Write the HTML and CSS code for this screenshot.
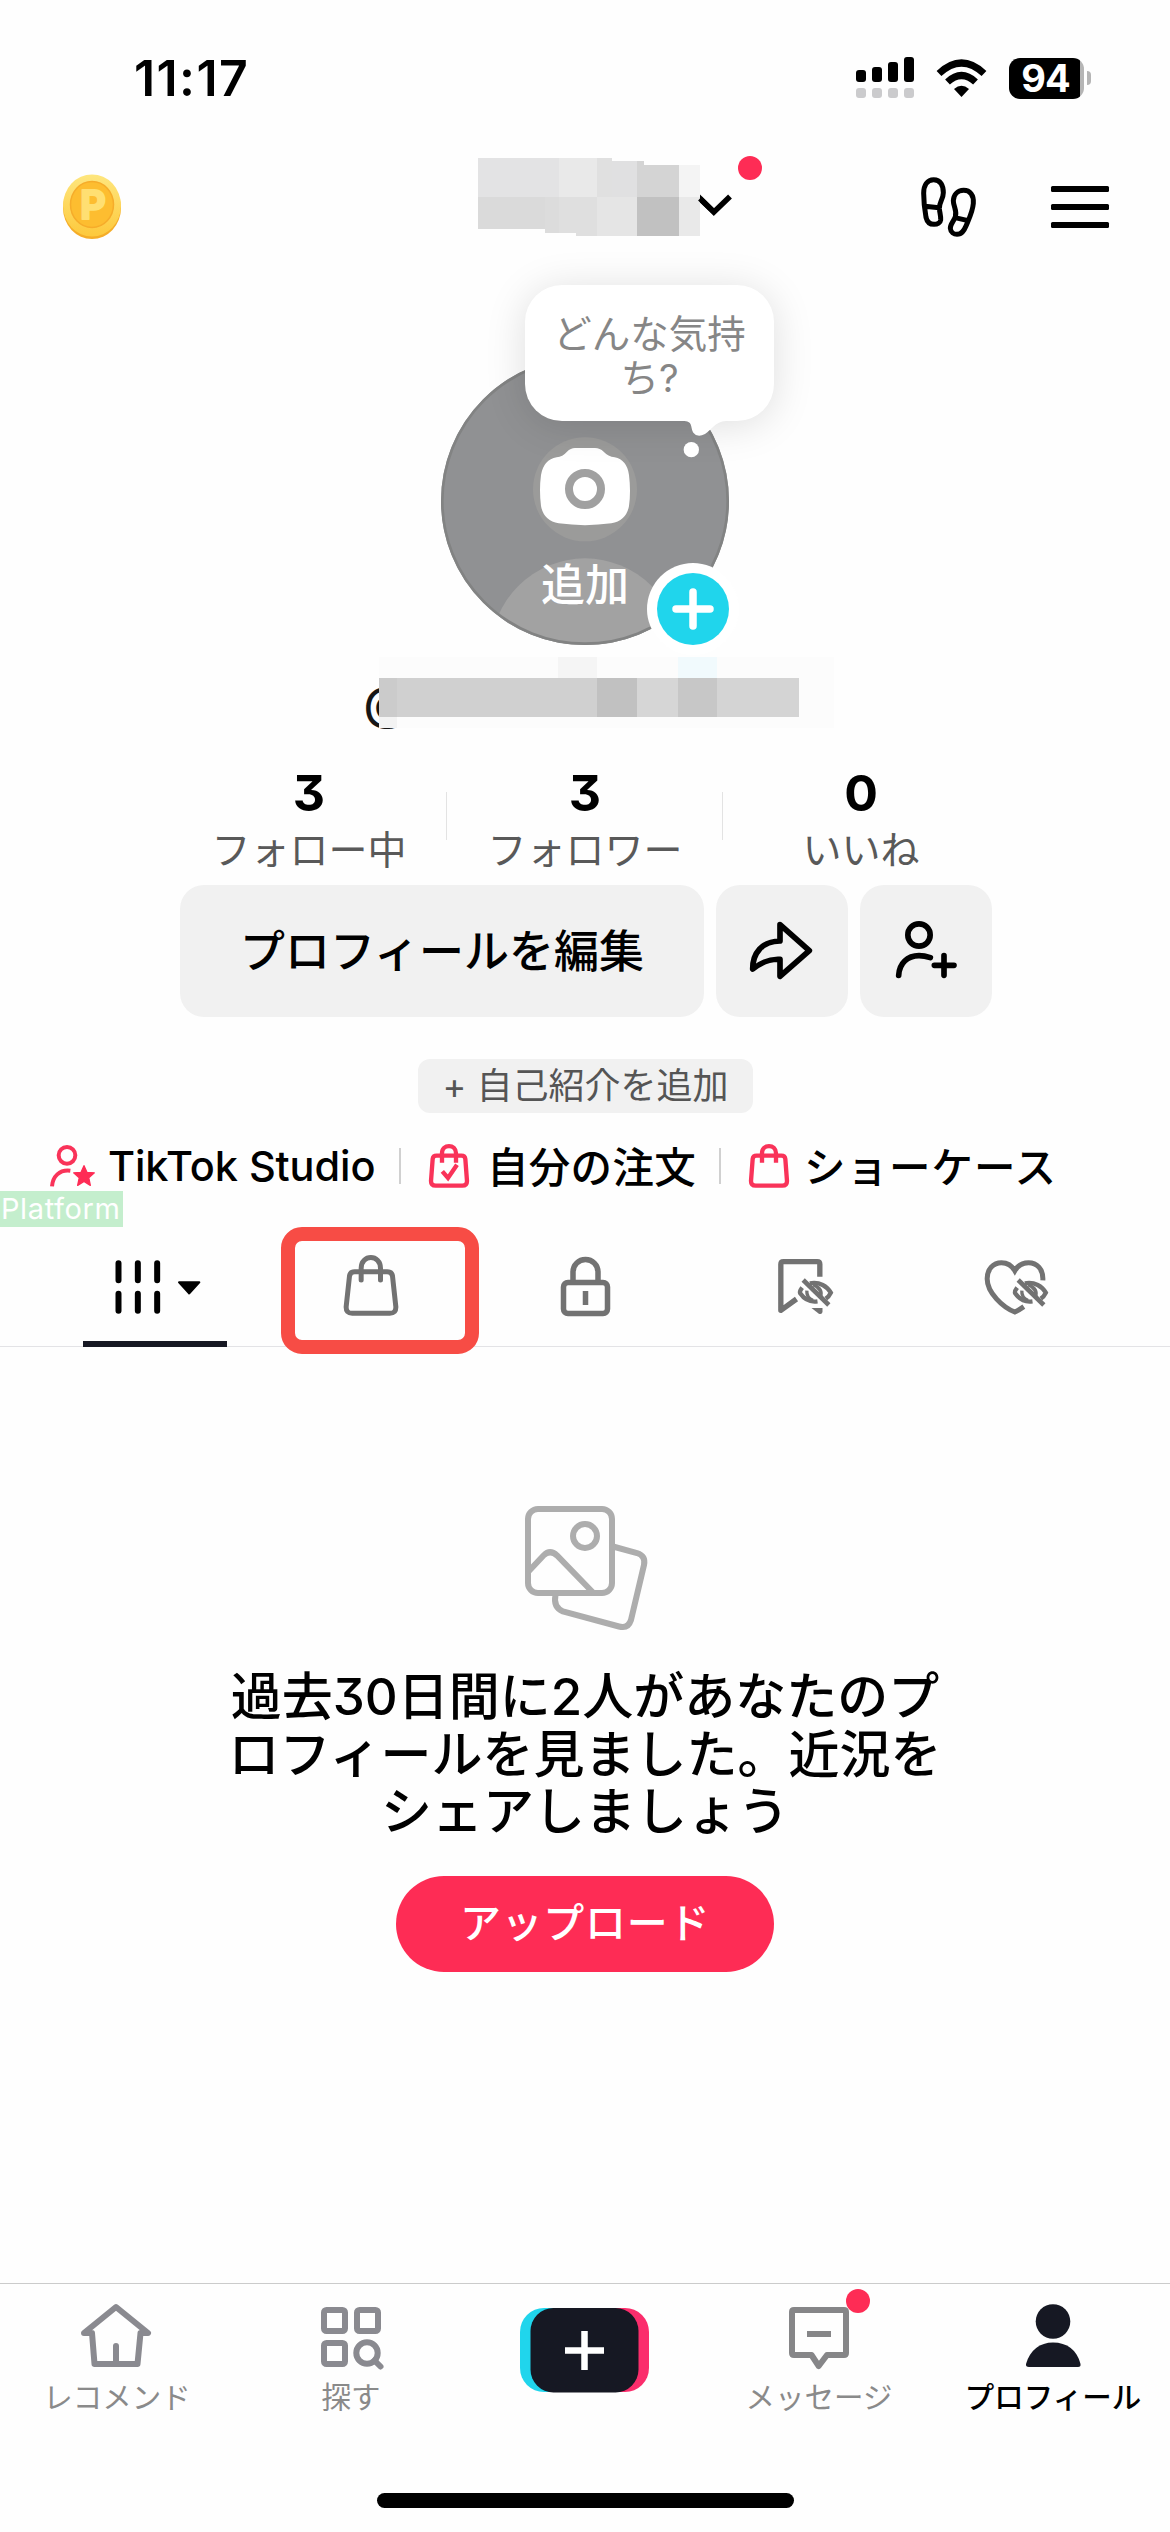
FILE: index.html
```html
<!DOCTYPE html>
<html lang="ja">
<head>
<meta charset="utf-8">
<title>プロフィール</title>
<link rel="stylesheet" href="styles.css">
</head>
<body>
<div class="status">
  <span class="time">11:17</span>
  <svg class="signal" width="60" height="44" viewBox="855 56 60 44">
    <g fill="#000"><rect x="856" y="70" width="10" height="12" rx="3"/><rect x="872" y="67" width="10" height="15" rx="3"/><rect x="888" y="62" width="10" height="20" rx="3"/><rect x="904" y="57" width="10" height="25" rx="3"/></g>
    <g fill="#cbcbcd"><rect x="856" y="88" width="10" height="10" rx="3"/><rect x="872" y="88" width="10" height="10" rx="3"/><rect x="888" y="88" width="10" height="10" rx="3"/><rect x="904" y="88" width="10" height="10" rx="3"/></g>
  </svg>
  <svg class="wifi" width="52" height="40" viewBox="935 57 52 40">
    <g fill="none" stroke="#000" stroke-width="7"><path d="M939 72.5Q961.500 51.500 984 72.500"/><path d="M947.500 81Q961.500 68 975.500 81"/></g>
    <path d="M954 88Q961.500 81.500 969 88L961.500 96Z"/>
  </svg>
  <div class="battery"><span>94</span></div>
  <i class="nub"></i>
</div>

<header class="top">
  <svg class="coin" width="58" height="66" viewBox="63 175 58 66">
    <defs><linearGradient id="c" x1="0" y1="0" x2="0" y2="1"><stop offset="0" stop-color="#fee67e"/><stop offset="1" stop-color="#fdc93c"/></linearGradient></defs>
    <ellipse cx="92" cy="209" rx="29" ry="31" fill="#f5ad28"/>
    <ellipse cx="92" cy="206.500" rx="29" ry="31" fill="url(#c)"/>
    <ellipse cx="92" cy="205.500" rx="21.500" ry="23" fill="#fdbd30" stroke="#f6ac2a" stroke-width="1.500"/>
    <text x="93" y="220" class="coin-p">P</text>
  </svg>
  <svg class="account" width="286" height="102" viewBox="478 156 286 102">
    <g shape-rendering="crispEdges">
      <rect x="478" y="158" width="81" height="39" fill="#e3e3e4"/><rect x="559" y="158" width="38" height="39" fill="#e9e9e9"/><rect x="597" y="158" width="15" height="39" fill="#e0e0e0"/><rect x="612" y="161" width="25" height="36" fill="#e0e0e1"/><rect x="637" y="161" width="7" height="36" fill="#d4d4d4"/><rect x="644" y="165" width="35" height="32" fill="#d4d4d4"/><rect x="679" y="165" width="21" height="32" fill="#f4f4f4"/>
      <rect x="478" y="197" width="67" height="32" fill="#dadada"/><rect x="545" y="197" width="14" height="36" fill="#dcdcdc"/><rect x="559" y="197" width="17" height="36" fill="#dfdfdf"/><rect x="576" y="197" width="21" height="39" fill="#dfdfdf"/><rect x="597" y="197" width="40" height="39" fill="#e5e5e5"/><rect x="637" y="197" width="42" height="39" fill="#c1c1c1"/><rect x="679" y="197" width="21" height="39" fill="#e9e9e9"/>
    </g>
    <path d="M700 194.500L714 208.500V216L700 202.500Z"/>
    <path d="M700 198.500L714 212L730 196.500" fill="none" stroke="#000" stroke-width="5.500"/>
    <circle cx="750" cy="168" r="12" fill="#fe2c55"/>
  </svg>
  <svg class="steps" width="60" height="102" viewBox="717 48 180 306" fill="none" stroke="#000" stroke-width="15">
    <path d="M731 160C731 135 742 119 761 119C782 119 790 137 790 158C790 178 777 186 778 206C779 218 783 228 782 240C781 248 773 253 762 253C748 253 741 245 738 232C735 215 731 185 731 160ZM735 199L777 203"/>
    <path d="M880 190C882 165 870 151 851 151C832 151 821 165 820 182C820 200 832 212 826 230C822 243 810 253 811 265C812 277 822 283 831 283C846 283 852 272 858 258C867 236 878 215 880 190ZM822 232L864 242"/>
  </svg>
  <div class="menu"><i></i><i></i><i></i></div>
</header>

<section class="avatar-area">
  <div class="avatar">
    <svg width="288" height="288" viewBox="303 261 864 864">
      <clipPath id="a"><circle cx="735" cy="693" r="432"/></clipPath>
      <g clip-path="url(#a)">
        <rect x="303" y="261" width="864" height="864" fill="#909193"/>
        <circle cx="735" cy="1148" r="283" fill="#a2a2a2"/>
        <circle cx="735" cy="658" r="156" fill="#9b9b9a"/>
      </g>
      <circle cx="735" cy="693" r="428" fill="none" stroke="#828383" stroke-width="8"/>
      <path fill="#fff" d="M705 534H765Q780 534 791 545Q804 559 824 562Q861 570 867 615Q873 665 867 708Q859 752 814 760Q735 771 656 760Q611 752 603 708Q597 660 603 615Q611 569 650 562Q668 560 681 545Q692 534 705 534Z"/>
      <circle cx="735" cy="657" r="48" fill="none" stroke="#a0a0a0" stroke-width="24"/>
      <text x="735" y="993" class="avatar-text">追加</text>
    </svg>
    <div class="mood">どんな気持ち?</div>
    <svg class="tail" width="48" height="50" viewBox="1020 450 144 150" fill="#fff">
      <path d="M1028 450V453C1060 453 1050 470 1060 488Q1072 504 1095 492C1115 480 1125 455 1158 453V450Z"/>
      <circle cx="1054" cy="539" r="23"/>
    </svg>
    <svg class="plus-badge" width="92" height="92" viewBox="0 0 92 92">
      <circle cx="46" cy="46" r="46" fill="#fff"/><circle cx="46" cy="46" r="36" fill="#20d5ec"/>
      <path d="M46 29V63M29 46H63" stroke="#fff" stroke-width="7.500" stroke-linecap="round"/>
    </svg>
  </div>
</section>

<div class="handle">
  <svg width="474" height="72" viewBox="360 657 474 72">
    <text x="363.500" y="720" class="handle-at">@</text>
    <g shape-rendering="crispEdges">
      <rect x="379" y="657" width="455" height="71" fill="#fcfcfc"/><rect x="558" y="657" width="39" height="21" fill="#f5f5f5"/><rect x="678" y="657" width="39" height="21" fill="#f1fafd"/>
      <rect x="379" y="678" width="18" height="39" fill="#cbcbcb"/><rect x="397" y="678" width="200" height="39" fill="#d0d0d0"/><rect x="597" y="678" width="40" height="39" fill="#c1c1c1"/><rect x="637" y="678" width="41" height="39" fill="#d6d6d6"/><rect x="678" y="678" width="39" height="39" fill="#c7c7c7"/><rect x="717" y="678" width="82" height="39" fill="#d4d4d4"/>
      <rect x="379" y="717" width="18" height="11" fill="#f3f3f3"/>
    </g>
  </svg>
</div>

<section class="stats">
  <div class="stat"><b>3</b><span>フォロー中</span></div>
  <div class="stat"><b>3</b><span>フォロワー</span></div>
  <div class="stat"><b>0</b><span>いいね</span></div>
</section>

<section class="actions">
  <button class="edit">プロフィールを編集</button>
  <button class="square"><svg width="132" height="132" viewBox="48 45 396 396" fill="none" stroke="#000" stroke-width="17" stroke-linejoin="round"><path d="M240 164L328 242L240 319V268C208 266 180 280 158 297C158 250 185 214 240 213Z"/></svg></button>
  <button class="square"><svg width="132" height="132" viewBox="480 45 396 396" fill="none" stroke="#000" stroke-width="17"><circle cx="657" cy="195" r="33.500"/><path stroke-linecap="round" d="M596 316C598 280 622 257 657 257C670 257 682 260 691 263M732 257V316M703 286H762"/></svg></button>
</section>

<div class="bio"><span>+ 自己紹介を追加</span></div>

<nav class="links">
  <svg width="48" height="52" viewBox="54 60 144 156"><g fill="none" stroke="#f93359" stroke-width="12"><circle cx="111" cy="106" r="25"/><path d="M66 199C68 170 88 148 121 152"/></g><path fill="#fe2c55" stroke="#fe2c55" stroke-width="4" stroke-linejoin="round" d="M162 137L170.800 156.900L193 158.500L176.300 173.600L181 196L162 184L143 196L147.700 173.600L131 158.500L153.200 156.900Z"/></svg>
  <span class="studio">TikTok Studio</span><i class="sep"></i>
  <svg class="l2" width="44" height="52" viewBox="138 810 132 156" fill="none" stroke="#f93359" stroke-width="13"><path d="M167 857H241Q252 857 253 867L258 933Q258 947 244 947H164Q150 947 150 933L155 867Q156 857 167 857ZM183 878V850C183 821 225 821 225 850V878M184 904L201 924L228 884"/></svg>
  <span class="orders">自分の注文</span><i class="sep s2"></i>
  <svg class="l3" width="44" height="52" viewBox="138 810 132 156" fill="none" stroke="#f93359" stroke-width="13"><path d="M167 857H241Q252 857 253 867L258 933Q258 947 244 947H164Q150 947 150 933L155 867Q156 857 167 857ZM183 878V850C183 821 225 821 225 850V878"/></svg>
  <span class="showcase">ショーケース</span>
  <em class="platform">Platform</em>
</nav>

<nav class="tabs">
  <div class="tab active"><svg width="215" height="155" viewBox="52.5 216 645 465"><path d="M264 430V481M322 430V481M380 430V481M264 521V572M322 521V572M380 521V572" stroke="#000" stroke-width="18" stroke-linecap="round"/><path d="M446 487H506L476 520Z" stroke="#000" stroke-width="7" stroke-linejoin="round"/></svg></div>
  <div class="tab"><svg width="215" height="155" viewBox="697.5 216 645 465" fill="none" stroke="#727272" stroke-width="15" stroke-linecap="round"><path d="M972 455H1070Q1084 455 1086 468L1096 560Q1097 580 1078 580H965Q946 580 947 560L957 468Q959 455 972 455ZM992 480V445C992 402 1050 402 1050 445V480"/></svg><div class="focus"></div></div>
  <div class="tab"><svg width="215" height="155" viewBox="477.5 1192 215 155" fill="none" stroke="#727272" stroke-width="5.500"><rect x="563" y="1282.500" width="44" height="31" rx="4.500"/><path d="M572.500 1282V1272A12.500 12.500 0 0 1 597.500 1272V1282M585 1291V1305"/></svg></div>
  <div class="tab"><svg width="215" height="155" viewBox="-22.5 966 645 465" fill="none" stroke="#727272" stroke-width="16"><path d="M358 1220V1183Q358 1175 350 1175H249Q241 1175 241 1183V1321L288 1287" stroke-linejoin="round"/><path d="M333 1314H366V1326Q364 1335 355 1331Z" fill="#727272" stroke="none"/><g id="eye" stroke-width="13"><path d="M308 1230L385 1305" stroke-width="14"/><path d="M328 1240C358 1234 380 1250 391 1268C387 1276 382 1282 376 1286"/><path d="M338 1244C358 1252 366 1266 359 1282" stroke-width="11"/><path d="M305 1253Q296 1265 299 1270C312 1289 330 1297 351 1294"/><path d="M319 1262C318 1275 325 1286 337 1291" stroke-width="10"/></g></svg></div>
  <div class="tab"><svg width="215" height="155" viewBox="622.5 966 645 465" fill="none" stroke="#727272" stroke-width="15"><path d="M1027 1231C1029 1196 1008 1178 984 1178C962 1178 950 1190 943 1202C936 1190 924 1178 903 1178C878 1178 860 1198 860 1226C860 1268 907 1312 943 1326C952 1322 960 1317 970 1310"/><use href="#eye" x="645"/></svg></div>
</nav>

<main class="empty">
  <svg width="132" height="136" viewBox="519 1500 132 136" fill="none" stroke="#adadad" stroke-width="6"><rect x="528" y="1509" width="84" height="84" rx="10"/><circle cx="585" cy="1536" r="12"/><path d="M528 1572L543.500 1555.500Q550 1549 557 1555.500L592.500 1592M613 1546.500L637 1553Q646 1556 644 1565L631 1620Q628 1629 619 1626.500L563 1611.500Q553 1607 555.500 1595"/></svg>
  <h1>過去30日間に2人があなたのプ<br>ロフィールを見ました。近況を<br>シェアしましょう</h1>
  <button class="upload">アップロード</button>
</main>

<footer class="bottom">
  <div class="item"><svg width="234" height="94" viewBox="0 2283 234 94" fill="none" stroke="#8a8a90" stroke-width="6" stroke-linejoin="round" stroke-linecap="round"><path d="M84 2333L116 2307L148 2333H140.500L137.500 2364H94.500L92 2333ZM116 2346V2363"/></svg><span>レコメンド</span></div>
  <div class="item"><svg width="234" height="94" viewBox="234 2283 234 94" fill="none" stroke="#8a8a90" stroke-width="6"><rect x="324" y="2310" width="21" height="21" rx="2.500"/><rect x="357" y="2310" width="21" height="21" rx="2.500"/><rect x="324" y="2343" width="21" height="21" rx="2.500"/><circle cx="367" cy="2353" r="10.700"/><path d="M374.500 2360.500L380.500 2366.500" stroke-linecap="round"/></svg><span>探す</span></div>
  <div class="item"><svg width="234" height="124" viewBox="468 2283 234 124"><rect x="520" y="2308" width="90" height="84" rx="24" fill="#20d5ec"/><rect x="560" y="2308" width="89" height="84" rx="24" fill="#fb2d6c"/><rect x="530.500" y="2308" width="108" height="84.500" rx="23" fill="#161823"/><path d="M584.500 2331V2370M565 2350.500H604" stroke="#fff" stroke-width="6.500"/></svg></div>
  <div class="item"><svg width="234" height="94" viewBox="702 2283 234 94" fill="none" stroke="#868688" stroke-width="6" stroke-linejoin="round"><path d="M794 2310H844Q846 2310 846 2312V2353Q846 2355 844 2355H827L818.700 2366L811.500 2355H794Q792 2355 792 2353V2312Q792 2310 794 2310ZM807 2334H831"/><circle cx="858" cy="2301" r="12" fill="#fe2c55" stroke="none"/></svg><span>メッセージ</span></div>
  <div class="item on"><svg width="234" height="94" viewBox="936 2283 234 94" fill="#161823"><circle cx="1053" cy="2321.500" r="17.300"/><path d="M1026 2364C1030 2350 1040 2342.500 1053 2342.500C1067 2342.500 1077 2350 1080.500 2364Q1081 2367 1078 2367H1029Q1025.500 2367 1026 2364Z"/></svg><span>プロフィール</span></div>
</footer>
<div class="indicator"></div>
</body>
</html>
```

FILE: styles.css
```css
* { box-sizing: border-box; }
body {
  margin: 0;
  width: 1170px;
  height: 2532px;
  background: #fefefe;
  color: #000;
  font-family: Inter, "Noto Sans CJK JP", sans-serif;
  font-feature-settings: "cv09";
  display: flex;
  flex-direction: column;
  overflow: hidden;
}
svg { display: block; flex: none; }
button {
  border: 0;
  padding: 0;
  font: inherit;
  color: inherit;
}
.status {
  height: 156px;
  padding-left: 134px;
  display: flex;
  align-items: center;
}
.time {
  width: 721px;
  font-size: 50px;
  font-weight: 600;
  letter-spacing: 1.4px;
  font-feature-settings: normal;
}
.wifi { margin-left: 20px; }
.battery {
  width: 75px;
  height: 41px;
  margin-left: 22px;
  border-radius: 11px;
  background: linear-gradient(90deg, #000 71px, #b5b5b5 71px);
  color: #fff;
  font-size: 38px;
  line-height: 41px;
  font-weight: 700;
  text-align: center;
  padding-right: 2px;
  letter-spacing: -1px;
}
.nub {
  width: 4px;
  height: 14px;
  margin-left: 3px;
  border-radius: 0 5px 5px 0;
  background: #b5b5b5;
}
.top {
  height: 102px;
  padding-left: 63px;
  display: flex;
  align-items: center;
}
.coin-p {
  font-size: 40px;
  font-weight: 700;
  text-anchor: middle;
  fill: #ffdf72;
  stroke: #ffdf72;
  stroke-width: 2;
  stroke-linejoin: round;
}
.account { margin-left: 357px; }
.steps { margin-left: 155px; }
.menu {
  width: 58px;
  margin-left: 72px;
  display: flex;
  flex-direction: column;
  gap: 12px;
}
.menu i { height: 6px; border-radius: 1.5px; background: #000; }
.avatar-area {
  height: 399px;
  padding-top: 99px;
  display: flex;
  justify-content: center;
}
.avatar { position: relative; width: 288px; height: 288px; }
.avatar-text { font-size: 132px; font-weight: 500; text-anchor: middle; fill: #fff; }
.mood {
  position: absolute;
  left: 84px;
  top: -72px;
  width: 249px;
  height: 136px;
  padding: 28px 24px 0 24px;
  border-radius: 37px;
  background: #fff;
  box-shadow: 0 4px 40px rgba(0, 0, 0, .13);
  color: #868686;
  font-size: 38.5px;
  line-height: 43.5px;
  text-align: center;
  word-break: break-all;
}
.tail { position: absolute; left: 239px; top: 63px; }
.plus-badge { position: absolute; left: 206px; top: 206px; }
.handle { height: 72px; padding-left: 360px; }
.handle-at { font-size: 47px; font-weight: 500; fill: #161616; }
.stats {
  height: 156px;
  padding: 35px 171px 0;
  display: flex;
}
.stat {
  flex: 1;
  height: 113px;
  display: flex;
  flex-direction: column;
  align-items: center;
  background: linear-gradient(#e3e3e3, #e3e3e3) right 28px / 1px 48px no-repeat;
}
.stat:last-child { background: none; }
.stat b { font-size: 50px; line-height: 59px; font-weight: 700; }
.stat span { font-size: 39px; line-height: 54px; color: #595959; }
.actions { display: flex; gap: 12px; padding-left: 180px; }
.actions button { height: 132px; border-radius: 24px; background: #f1f1f1; }
.actions .edit {
  width: 524px;
  padding-bottom: 5px;
  font-size: 45px;
  font-weight: 500;
}
.square { width: 132px; }
.bio {
  width: 335px;
  height: 54px;
  margin: 42px 0 0 418px;
  border-radius: 12px;
  background: #f1f1f1;
  color: #555;
  font-size: 36px;
  line-height: 54px;
  text-align: center;
  white-space: nowrap;
}
.links {
  position: relative;
  height: 52px;
  margin-top: 27px;
  padding-left: 48px;
  display: flex;
  align-items: center;
  font-size: 41.5px;
  font-weight: 500;
  white-space: nowrap;
}
.studio { width: 291px; margin-left: 12px; letter-spacing: -.1px; }
.sep { width: 2px; height: 36px; background: #d0d0d0; }
.l2 { margin-left: 26px; }
.orders { width: 229px; margin-left: 16px; padding-bottom: 3px; letter-spacing: .3px; }
.s2 { margin-left: 3px; }
.l3 { margin-left: 26px; }
.showcase { margin-left: 13px; padding-bottom: 3px; letter-spacing: 1px; }
.platform {
  position: absolute;
  left: 0;
  top: 51px;
  width: 123px;
  height: 36px;
  padding-left: 1px;
  background: #c4eecd;
  color: #fff;
  font: 400 29px/36px Inter, sans-serif;
  letter-spacing: .6px;
}
.tabs {
  height: 155px;
  padding: 0 47.5px;
  display: flex;
  border-bottom: 1px solid #e3e3e6;
}
.tab { position: relative; width: 215px; height: 155px; }
.active::after {
  content: "";
  position: absolute;
  left: 35.5px;
  bottom: 0;
  width: 144px;
  height: 6px;
  background: #161823;
}
.focus {
  position: absolute;
  left: 18.5px;
  top: 35px;
  width: 198px;
  height: 127px;
  border: 14px solid #f74c45;
  border-radius: 21px;
}
.empty {
  height: 936px;
  padding-top: 153px;
  display: flex;
  flex-direction: column;
  align-items: center;
}
.empty h1 {
  margin: 32px 0 35px;
  font-size: 51px;
  line-height: 57.5px;
  font-weight: 500;
  text-align: center;
  white-space: nowrap;
}
.upload {
  width: 378px;
  height: 96px;
  padding-bottom: 7px;
  border-radius: 48px;
  background: #fe2c55;
  color: #fff;
  font-size: 41px;
  font-weight: 500;
  letter-spacing: .7px;
}
.bottom {
  height: 210px;
  display: flex;
  border-top: 1px solid #cbcbcb;
}
.item {
  width: 234px;
  display: flex;
  flex-direction: column;
  align-items: center;
  color: #8a8a8a;
  font-size: 29.5px;
  line-height: 40px;
}
.item svg { margin-top: -1px; }
.on { color: #000; font-weight: 500; }
.indicator {
  width: 417px;
  height: 15px;
  margin-left: 377px;
  border-radius: 8px;
  background: #000;
}
```
